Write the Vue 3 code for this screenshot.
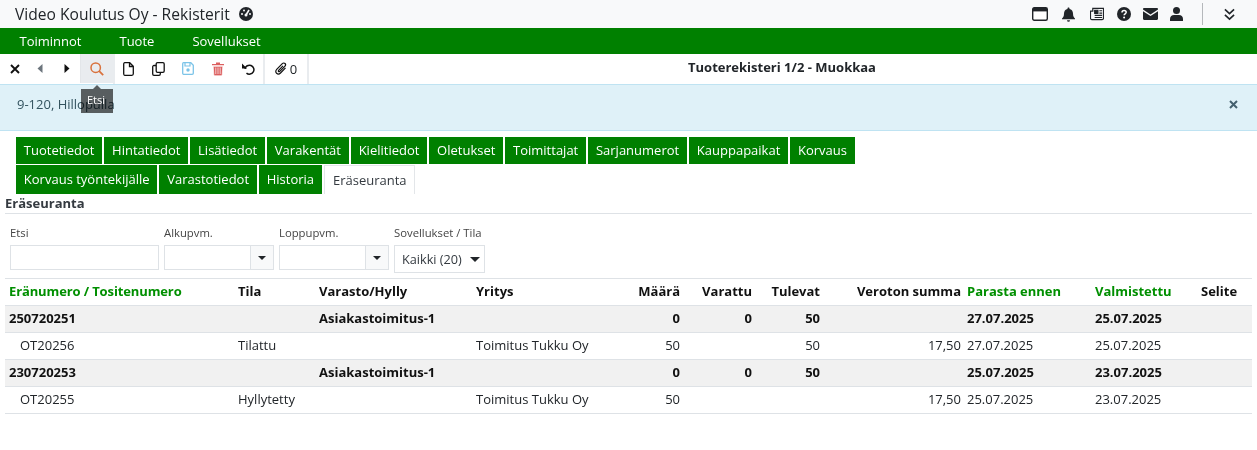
<script setup>
const tabRows = [
  ['Tuotetiedot', 'Hintatiedot', 'Lisätiedot', 'Varakentät', 'Kielitiedot', 'Oletukset', 'Toimittajat', 'Sarjanumerot', 'Kauppapaikat', 'Korvaus'],
  ['Korvaus työntekijälle', 'Varastotiedot', 'Historia', 'Eräseuranta'],
];
const rows = [
  { id: '250720251', group: true, varasto: 'Asiakastoimitus-1', maara: '0', varattu: '0', tulevat: '50', parasta: '27.07.2025', valm: '25.07.2025' },
  { id: 'OT20256', tila: 'Tilattu', yritys: 'Toimitus Tukku Oy', maara: '50', tulevat: '50', summa: '17,50', parasta: '27.07.2025', valm: '25.07.2025' },
  { id: '230720253', group: true, varasto: 'Asiakastoimitus-1', maara: '0', varattu: '0', tulevat: '50', parasta: '25.07.2025', valm: '23.07.2025' },
  { id: 'OT20255', tila: 'Hyllytetty', yritys: 'Toimitus Tukku Oy', maara: '50', summa: '17,50', parasta: '25.07.2025', valm: '23.07.2025' },
];
</script>

<template>
  <div class="page">
    <header class="topbar">
      <div class="brand">
        <span>Video Koulutus Oy - Rekisterit</span>
        <svg class="gauge" width="14" height="14" viewBox="0 0 14 14"><circle cx="7" cy="7" r="7" fill="#212529"/><circle cx="7" cy="8" r="1.5" fill="#f8f9fa"/><path d="M7 8l3-5" stroke="#f8f9fa" stroke-width="1.6"/><circle cx="3" cy="7" r="1" fill="#f8f9fa"/><circle cx="5" cy="3.4" r="1" fill="#f8f9fa"/><circle cx="11" cy="7" r="1" fill="#f8f9fa"/></svg>
      </div>
      <div class="top-icons">
        <svg width="16" height="14" viewBox="0 0 16 14"><rect x="0.7" y="0.7" width="14.6" height="12.6" rx="1.5" fill="#fff" stroke="#212529" stroke-width="1.4"/><rect x="1" y="1" width="14" height="3.4" fill="#212529"/></svg>
        <svg class="ml2" width="13" height="15" viewBox="0 0 13 15"><path d="M6.500 0.500c-.6 0-1 .4-1 1v.5C3.300 2.500 2 4.200 2 6.500c0 3-1 3.800-2 5v.8h13v-.8c-1-1.200-2-2-2-5 0-2.300-1.300-4-3.500-4.500v-.5c0-.6-.4-1-1-1z" fill="#212529"/><path d="M5 13.200h3a1.500 1.500 0 0 1-3 0z" fill="#212529"/></svg>
        <svg class="ml3" width="14" height="14" viewBox="0 0 15 14"><path d="M3 1h11.500v10.500a1.500 1.500 0 0 1-1.500 1.500H2a1.500 1.500 0 0 1-1.500-1.500V4H3z" fill="none" stroke="#212529" stroke-width="1.300"/><path d="M5 3h3.500v3.500H5zM10 3.500h3M10 6h3M5 8.500h8M5 10.700h8" stroke="#212529" stroke-width="1.200" fill="#212529"/></svg>
        <svg class="ml1" width="14" height="14" viewBox="0 0 14 14"><circle cx="7" cy="7" r="7" fill="#212529"/><path d="M5 5.400c0-1.200 1-1.900 2.100-1.900S9.200 4.200 9.200 5.300c0 1.500-2.100 1.500-2.100 3" fill="none" stroke="#fff" stroke-width="1.500"/><circle cx="7.100" cy="10.400" r="1" fill="#fff"/></svg>
        <svg width="15" height="12" viewBox="0 0 15 12"><path d="M1.200 0h12.600c.7 0 1.200.5 1.200 1.200v.3L7.500 6.400 0 1.500v-.3C0 .5.500 0 1.200 0z" fill="#212529"/><path d="M0 3.200l7.500 4.900L15 3.200v7.600c0 .7-.5 1.200-1.200 1.200H1.200C.5 12 0 11.500 0 10.800z" fill="#212529"/></svg>
        <svg width="13" height="14" viewBox="0 0 13 14"><circle cx="6.500" cy="3.500" r="3.500" fill="#212529"/><path d="M0 14v-2c0-2.400 1.800-4 4-4h5c2.200 0 4 1.600 4 4v2z" fill="#212529"/></svg>
        <span class="top-sep"></span>
        <svg width="11" height="13" viewBox="0 0 12 13"><path d="M1 1l5 4.500L11 1M1 7l5 4.500L11 7" fill="none" stroke="#212529" stroke-width="1.800"/></svg>
      </div>
    </header>

    <nav class="menu">
      <span>Toiminnot</span>
      <span>Tuote</span>
      <span>Sovellukset</span>
    </nav>

    <div class="toolbar">
      <div class="tool-group">
        <button class="tool w-close"><svg width="10" height="10" viewBox="0 0 10 10"><path d="M1 1l8 8M9 1l-8 8" stroke="#111" stroke-width="1.900"/></svg></button>
        <button class="tool w-nav"><svg width="6" height="9" viewBox="0 0 6 9"><path d="M5.500 0v9L.5 4.500z" fill="#6c757d"/></svg></button>
        <button class="tool w-nav"><svg width="6" height="9" viewBox="0 0 6 9"><path d="M.5 0v9l5-4.500z" fill="#111"/></svg></button>
        <button class="tool w-search active"><svg width="14" height="14" viewBox="0 0 14 14"><circle cx="5.700" cy="5.700" r="4.700" fill="none" stroke="#d9713c" stroke-width="1.500"/><path d="M9.200 9.200l4 4" stroke="#d9713c" stroke-width="1.800"/></svg></button>
      </div>
      <div class="tool-group second">
        <button class="tool w-act"><svg width="11" height="14" viewBox="0 0 11 14"><path d="M1.700.7h5l3.600 3.600v7.500c0 .8-.6 1.500-1.400 1.500H1.700c-.5 0-1-.7-1-1.500V2.200c0-.8.500-1.500 1-1.500zM6.500 1v3.500h3.500" fill="none" stroke="#111" stroke-width="1.300"/></svg></button>
        <button class="tool w-act"><svg width="13" height="14" viewBox="0 0 13 14"><rect x="4.200" y="0.700" width="8" height="9.600" rx="1.300" fill="none" stroke="#111" stroke-width="1.300"/><path d="M4 3.500H2C1.300 3.500.7 4 .7 4.800v7.200c0 .7.600 1.300 1.300 1.300h5c.7 0 1.300-.6 1.300-1.300v-1.500" fill="none" stroke="#111" stroke-width="1.300"/></svg></button>
        <button class="tool w-act"><svg width="12" height="13" viewBox="0 0 12 13"><path d="M1.500.7h7.300l2.500 2.500v8c0 .6-.5 1.100-1.100 1.100H1.500c-.5 0-.8-.5-.8-1.100V1.800c0-.6.300-1.100.8-1.100z" fill="none" stroke="#7cc4e8" stroke-width="1.300"/><path d="M3 1v3h5V1" fill="none" stroke="#7cc4e8" stroke-width="1.200"/><circle cx="6" cy="8" r="1.700" fill="#7cc4e8"/></svg></button>
        <button class="tool w-act"><svg width="12" height="14" viewBox="0 0 12 14"><path d="M0 2h12v1.300H0zM4 .5h4V2H4z" fill="#dc5f5f"/><path d="M1.200 4.300h9.600l-.6 8.500c0 .5-.5 1-1 1H2.800c-.5 0-1-.5-1-1zM3.800 5.500v6.500M6 5.500v6.500M8.200 5.500v6.500" fill="#dc5f5f" stroke="#fff" stroke-width=".7"/></svg></button>
        <button class="tool w-act"><svg width="13" height="13" viewBox="0 0 13 13"><path d="M3 6.500A4.500 4.500 0 1 1 4.500 10.800" fill="none" stroke="#111" stroke-width="1.500" transform="translate(0 .3)"/><path d="M0 1.500v5h5z" fill="#111"/></svg></button>
      </div>
      <div class="tool-group">
        <button class="tool w-clip"><svg width="12" height="13" viewBox="0 0 12 13"><path d="M10.500 5.800L5.500 11c-1.200 1.200-2.800 1.300-3.900.3S.5 8.500 1.700 7.300L7.300 1.700c.9-.9 2-.9 2.700-.2s.7 1.900-.2 2.800L5 9.200c-.5.500-1.100.6-1.400.3s-.3-.9.200-1.400L8 3.900" fill="none" stroke="#111" stroke-width="1.200"/></svg><span>0</span></button>
      </div>
      <div class="form-title">Tuoterekisteri 1/2 - Muokkaa</div>
      <div class="tooltip"><span>Etsi</span></div>
    </div>

    <div class="alert">
      <span>9-120, Hillopulla</span>
      <svg width="9" height="9" viewBox="0 0 9 9"><path d="M1 1l7 7M8 1L1 8" stroke="#44606e" stroke-width="2"/></svg>
    </div>

    <div class="tabs">
      <div v-for="(tabRow, i) in tabRows" :key="i" class="tab-row">
        <div v-for="t in tabRow" :key="t" class="tab" :class="{ current: t === 'Eräseuranta' }">{{ t }}</div>
      </div>
    </div>

    <section class="panel">
      <h2 class="panel-title">Eräseuranta</h2>
      <div class="filters">
        <div class="field">
          <label>Etsi</label>
          <div class="box search-box"></div>
        </div>
        <div class="field">
          <label>Alkupvm.</label>
          <div class="box date-box"><span class="addon"><i class="caret"></i></span></div>
        </div>
        <div class="field">
          <label>Loppupvm.</label>
          <div class="box date-box"><span class="addon"><i class="caret"></i></span></div>
        </div>
        <div class="field">
          <label>Sovellukset / Tila</label>
          <div class="box select-box">Kaikki (20)<i class="caret big"></i></div>
        </div>
      </div>

      <table class="grid">
        <colgroup>
          <col style="width: 229px" /><col style="width: 81px" /><col style="width: 157px" /><col style="width: 148px" />
          <col style="width: 62px" /><col style="width: 72px" /><col style="width: 68px" /><col style="width: 141px" />
          <col style="width: 128px" /><col style="width: 106px" /><col style="width: 55px" />
        </colgroup>
        <thead>
          <tr>
            <th class="sorted first">Eränumero / Tositenumero</th>
            <th>Tila</th>
            <th>Varasto/Hylly</th>
            <th>Yritys</th>
            <th class="num">Määrä</th>
            <th class="num">Varattu</th>
            <th class="num">Tulevat</th>
            <th class="num">Veroton summa</th>
            <th class="sorted">Parasta ennen</th>
            <th class="sorted">Valmistettu</th>
            <th>Selite</th>
          </tr>
        </thead>
        <tbody>
          <tr v-for="r in rows" :key="r.id" :class="{ group: r.group }">
            <td :class="{ child: !r.group }">{{ r.id }}</td>
            <td>{{ r.tila }}</td>
            <td>{{ r.varasto }}</td>
            <td>{{ r.yritys }}</td>
            <td class="num">{{ r.maara }}</td>
            <td class="num">{{ r.varattu }}</td>
            <td class="num">{{ r.tulevat }}</td>
            <td class="num">{{ r.summa }}</td>
            <td>{{ r.parasta }}</td>
            <td>{{ r.valm }}</td>
            <td></td>
          </tr>
        </tbody>
      </table>
    </section>
  </div>
</template>

<style>
html, body { margin: 0; background: #fff; }
</style>

<style scoped>
.page {
  width: 1257px;
  height: 450px;
  overflow: hidden;
  font-family: "Open Sans", sans-serif;
  font-size: 13px;
  color: #212529;
}

.topbar {
  height: 28px;
  background: #f8f9fa;
  display: flex;
  align-items: center;
  justify-content: space-between;
  padding-left: 15px;
  box-sizing: border-box;
}
.brand {
  display: flex;
  align-items: center;
  gap: 9px;
  font-size: 15.6px;
  color: #212529;
}
.top-icons {
  display: flex;
  align-items: center;
  gap: 12px;
  padding-right: 22px;
}
.ml1 { margin-left: 1px; }
.ml2 { margin-left: 2px; }
.ml3 { margin-left: 3px; }
.top-sep {
  width: 1px;
  height: 22px;
  background: #b5b8bb;
  margin: 0 9px 0 7px;
}

.menu {
  height: 26px;
  background: #008000;
  color: #fff;
  display: flex;
  align-items: center;
  padding-left: 19.5px;
  gap: 38px;
  font-size: 13px;
}

.toolbar {
  position: relative;
  height: 30px;
  display: flex;
  background: #fff;
}
.tool-group {
  display: flex;
  border-right: 2px solid #e9ecef;
}
.tool-group.second { margin-left: -2px; }
.tool {
  border: 0;
  background: transparent;
  padding: 0;
  height: 29px;
  display: flex;
  align-items: center;
  justify-content: center;
  font-family: inherit;
  font-size: 13px;
  color: #212529;
}
.w-close { width: 27px; padding-left: 2px; box-sizing: border-box; }
.w-nav { width: 26.5px; }
.w-search { width: 33px; border-left: 1px solid #e3e6e9; box-sizing: border-box; }
.active { background: #e9ecef; }
.w-act { width: 30px; }
.w-clip { width: 42px; gap: 3px; }
.form-title {
  flex: 1;
  text-align: center;
  font-weight: 700;
  font-size: 13px;
  line-height: 26px;
  padding-right: 122px;
  padding-left: 120px;
  box-sizing: border-box;
}
/* bg is a multiply layer so the alert text below stays readable, like the original */
.tooltip {
  position: absolute;
  left: 81px;
  top: 35px;
  width: 32px;
  height: 24px;
  color: #fff;
  font-size: 11px;
  line-height: 22px;
  text-align: center;
  box-sizing: border-box;
  padding-right: 2px;
}
.tooltip span {
  position: relative;
}
.tooltip::before {
  content: "";
  position: absolute;
  inset: 0;
  background: #646363;
  mix-blend-mode: multiply;
}
.tooltip::after {
  content: "";
  position: absolute;
  left: 12px;
  top: -4px;
  border-left: 4px solid transparent;
  border-right: 4px solid transparent;
  border-bottom: 4px solid #646363;
  mix-blend-mode: multiply;
}

.alert {
  height: 47px;
  box-sizing: border-box;
  background: #dff1f8;
  border-top: 1px solid #bfe3f2;
  border-bottom: 1px solid #bfe3f2;
  display: flex;
  align-items: center;
  justify-content: space-between;
  padding: 0 19px 7px 17px;
  color: #33535f;
  font-size: 13px;
}

.tabs {
  padding: 6px 0 0 16px;
}
.tab-row {
  display: flex;
  gap: 2px;
  margin-bottom: 1px;
}
.tab {
  height: 27px;
  line-height: 26px;
  padding: 0 7.85px;
  background: #008000;
  color: #fff;
  font-size: 13px;
  box-sizing: border-box;
}
.tab-row + .tab-row {
  margin-bottom: 0;
}
.tab-row + .tab-row .tab {
  height: 29px;
  line-height: 28px;
}
.tab.current {
  background: #fff;
  color: #343a40;
  border: 1px solid #e3e6e9;
  border-bottom: 0;
  padding: 0 7px 0 8px;
}

.panel {
  padding: 0 5px;
}
.panel-title {
  margin: 0;
  font-size: 13px;
  font-weight: 700;
  line-height: 18px;
  height: 20px;
  box-sizing: border-box;
  border-bottom: 1px solid #dee2e6;
  color: #343a40;
}
.filters {
  display: flex;
  gap: 5px;
  padding: 11px 5px 0;
  height: 64px;
  box-sizing: border-box;
}
.field label {
  display: block;
  font-size: 11.3px;
  line-height: 16px;
  height: 20px;
  color: #444;
}
.box {
  border: 1px solid #dee2e6;
  box-sizing: border-box;
  background: #fff;
}
.search-box { width: 149px; height: 25px; }
.date-box {
  width: 110px;
  height: 25px;
  display: flex;
  justify-content: flex-end;
}
.addon {
  width: 22px;
  background: #f8f9fa;
  border-left: 1px solid #dee2e6;
  display: flex;
  align-items: center;
  justify-content: center;
}
.select-box {
  width: 91px;
  height: 28px;
  display: flex;
  align-items: center;
  padding-left: 7px;
  gap: 8px;
  font-size: 12.7px;
  color: #343a40;
}
.caret {
  width: 0;
  height: 0;
  border-left: 4px solid transparent;
  border-right: 4px solid transparent;
  border-top: 4px solid #212529;
}
.caret.big {
  border-left-width: 5px;
  border-right-width: 5px;
  border-top-width: 5px;
}

.grid {
  width: 1247px;
  table-layout: fixed;
  border-collapse: collapse;
  border-top: 1px solid #dee2e6;
  font-size: 13px;
}
.grid th, .grid td {
  height: 27px;
  padding: 0 2px 2px 4px;
  box-sizing: border-box;
  border-bottom: 1px solid #dee2e6;
  text-align: left;
  white-space: nowrap;
}
.grid th {
  font-weight: 700;
  color: #111;
}
.grid th.sorted { color: #008f00; }
.grid th.first { letter-spacing: -0.12px; }
.grid .num { text-align: right; }
.grid .group td {
  background: #f1f1f1;
  font-weight: 700;
  color: #111;
}
.grid .child { padding-left: 15px; }
</style>
